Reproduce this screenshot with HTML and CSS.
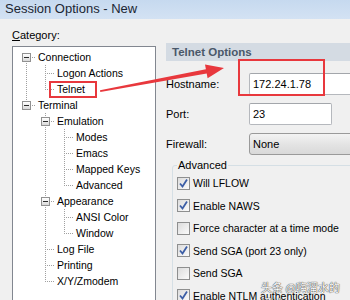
FILE: index.html
```html
<!DOCTYPE html>
<html lang="en">

<head>
    <meta charset="UTF-8">
    <meta name="viewport" content="width=device-width, initial-scale=1.0">
    <title>Session Options - New</title>
    <link rel="stylesheet" href="styles.css">
</head>

<body>
    <div class="window">
        <div class="titlebar">Session Options - New</div>
        <div class="dialog">
            <div class="category">
                <div class="cat-label"><u>C</u>ategory:</div>
                <div class="tree">
                    <div class="row"><span class="cell down"><span class="exp"></span></span><span class="name">Connection</span></div>
                    <div class="row"><span class="cell i"></span><span class="cell t"></span><span class="name">Logon Actions</span></div>
                    <div class="row"><span class="cell i"></span><span class="cell l"></span><span class="name">Telnet</span></div>
                    <div class="row"><span class="cell l"><span class="exp"></span></span><span class="name">Terminal</span></div>
                    <div class="row"><span class="cell"></span><span class="cell t"><span class="exp"></span></span><span class="name">Emulation</span></div>
                    <div class="row"><span class="cell"></span><span class="cell i"></span><span class="cell t"></span><span class="name">Modes</span></div>
                    <div class="row"><span class="cell"></span><span class="cell i"></span><span class="cell t"></span><span class="name">Emacs</span></div>
                    <div class="row"><span class="cell"></span><span class="cell i"></span><span class="cell t"></span><span class="name">Mapped Keys</span></div>
                    <div class="row"><span class="cell"></span><span class="cell i"></span><span class="cell l"></span><span class="name">Advanced</span></div>
                    <div class="row"><span class="cell"></span><span class="cell t"><span class="exp"></span></span><span class="name">Appearance</span></div>
                    <div class="row"><span class="cell"></span><span class="cell i"></span><span class="cell t"></span><span class="name">ANSI Color</span></div>
                    <div class="row"><span class="cell"></span><span class="cell i"></span><span class="cell l"></span><span class="name">Window</span></div>
                    <div class="row"><span class="cell"></span><span class="cell t"></span><span class="name">Log File</span></div>
                    <div class="row"><span class="cell"></span><span class="cell t"></span><span class="name">Printing</span></div>
                    <div class="row"><span class="cell"></span><span class="cell l"></span><span class="name">X/Y/Zmodem</span></div>
                </div>
            </div>

            <div class="options">
                <div class="band">Telnet Options</div>
                <div class="fields">
                    <span class="label">Hostname:</span>
                    <div class="input">172.24.1.78</div>
                    <span class="label">Port:</span>
                    <div class="input port">23</div>
                    <span class="label">Firewall:</span>
                    <div class="select">None</div>
                </div>
                <fieldset class="group">
                    <legend>Advanced</legend>
                    <div class="check"><span class="box"><svg width="11" height="11" viewBox="0 0 11 11"><path d="M2 5.5 L4.5 8.5 L9 1.5" /></svg></span>Will LFLOW</div>
                    <div class="check"><span class="box"><svg width="11" height="11" viewBox="0 0 11 11"><path d="M2 5.5 L4.5 8.5 L9 1.5" /></svg></span>Enable NAWS</div>
                    <div class="check"><span class="box"></span>Force character at a time mode</div>
                    <div class="check"><span class="box"><svg width="11" height="11" viewBox="0 0 11 11"><path d="M2 5.5 L4.5 8.5 L9 1.5" /></svg></span>Send SGA (port 23 only)</div>
                    <div class="check"><span class="box"></span>Send SGA</div>
                    <div class="check"><span class="box"><svg width="11" height="11" viewBox="0 0 11 11"><path d="M2 5.5 L4.5 8.5 L9 1.5" /></svg></span>Enable NTLM authentication</div>
                </fieldset>
            </div>
        </div>

        <!-- red annotation marks drawn over the screenshot -->
        <svg class="marks" width="350" height="300" viewBox="0 0 350 300">
            <rect x="50" y="82" width="46" height="15" />
            <rect x="239" y="60" width="85" height="35" />
            <polygon class="arrow" points="100,90.2 205.9,69.2 205,64.4 224,68 207.6,78.2 206.7,73.4 100.3,91.9" />
        </svg>
        <div class="watermark">头条 @嗨溜水的通站</div>
    </div>
</body>

</html>
```

FILE: styles.css
```css
html,
body {
    margin: 0;
    overflow: hidden;
}

body {
    width: 350px;
    height: 300px;
    background-color: #f0f0f0;
    font-family: "Liberation Sans", Arial, sans-serif;
    font-size: 11px;
    color: #000;
}

.window {
    position: relative;
    height: 300px;
    overflow: hidden;
}

.titlebar {
    height: 19px;
    line-height: 17px;
    padding-left: 5px;
    font-size: 13px;
    color: #1b2633;
    background: linear-gradient(#c6d9ef, #d3e2f3);
}

.dialog {
    display: flex;
    gap: 10px;
    padding: 8px 0 0 12px;
}

/* left column: category tree */
.category {
    width: 144px;
    flex: none;
}

.cat-label {
    line-height: 16px;
    margin-bottom: 3px;
}

.tree {
    height: 270px;
    box-sizing: border-box;
    border: 1px solid #828790;
    background-color: #fff;
    padding: 2px 0 0 4px;
}

.row {
    display: flex;
    height: 16px;
    line-height: 16px;
    font-size: 10.5px;
}

.name {
    margin-left: 2px;
    white-space: nowrap;
}

.cell {
    width: 19px;
    height: 16px;
    flex: none;
    display: flex;
    justify-content: center;
    align-items: flex-start;
    background-repeat: no-repeat;
    --v: repeating-linear-gradient(#a0a0a0 0 1px, transparent 1px 2px);
    --h: repeating-linear-gradient(90deg, #a0a0a0 0 1px, transparent 1px 2px);
}

.cell.i {
    background-image: var(--v);
    background-size: 1px 16px;
    background-position: 9px 0;
}

.cell.t {
    background-image: var(--v), var(--h);
    background-size: 1px 16px, 10px 1px;
    background-position: 9px 0, 9px 8px;
}

.cell.l {
    background-image: var(--v), var(--h);
    background-size: 1px 9px, 10px 1px;
    background-position: 9px 0, 9px 8px;
}

.cell.down {
    background-image: var(--v), var(--h);
    background-size: 1px 8px, 10px 1px;
    background-position: 9px 8px, 9px 8px;
}

.exp {
    width: 9px;
    height: 9px;
    margin-top: 4px;
    box-sizing: border-box;
    border: 1px solid #919191;
    background:
        linear-gradient(#2b2b2b, #2b2b2b) center / 5px 1px no-repeat,
        linear-gradient(#ffffff, #d9d9d9);
}

/* right column: telnet options */
.options {
    width: 230px;
    flex: none;
    margin-top: 16px;
}

.band {
    height: 18px;
    line-height: 19px;
    padding-left: 6px;
    font-size: 11.5px;
    font-weight: bold;
    color: #4a5869;
    background-color: #d4dbe3;
}

.fields {
    display: grid;
    grid-template-columns: 83px 1fr;
    row-gap: 8px;
    margin-top: 12px;
    align-items: center;
}

.input,
.select {
    height: 22px;
    line-height: 20px;
    box-sizing: border-box;
    padding-left: 3px;
    border: 1px solid #b5b8bd;
    border-top-color: #a3a6ab;
    border-radius: 2px;
    background-color: #fff;
}

.input.port {
    width: 83px;
}

.select {
    border-color: #9a9a9a;
    border-radius: 3px;
    background: linear-gradient(#f3f3f3, #e4e4e4 50%, #d9d9d9);
}

.group {
    margin: 2px 0 0 6px;
    padding: 2px 4px 0;
    height: 150px;
    border: 1px solid #d5dfe5;
    border-radius: 3px;
}

.group legend {
    padding: 0 1px;
    line-height: 16px;
}

.check {
    display: flex;
    align-items: center;
    gap: 3px;
    height: 16px;
    margin-bottom: 6.6px;
    font-size: 10.5px;
    white-space: nowrap;
}

.box {
    width: 13px;
    height: 13px;
    flex: none;
    box-sizing: border-box;
    border: 1px solid #8e8f8f;
    background: linear-gradient(135deg, #dcdcdc, #fbfbfb);
    display: flex;
    align-items: center;
    justify-content: center;
}

.box svg path {
    fill: none;
    stroke: #3c5ea6;
    stroke-width: 1.8;
}

/* overlays */
.marks {
    position: absolute;
    left: 0;
    top: 0;
}

.marks rect {
    fill: none;
    stroke: #e8383d;
    stroke-width: 2;
}

.marks .arrow {
    fill: #e8383d;
}

.watermark {
    position: absolute;
    left: 261px;
    top: 279px;
    font-family: "Noto Sans CJK SC", sans-serif;
    font-size: 11px;
    color: #fff;
    text-shadow: 0 0 1px #333, 0 0 1px #333;
}
```
